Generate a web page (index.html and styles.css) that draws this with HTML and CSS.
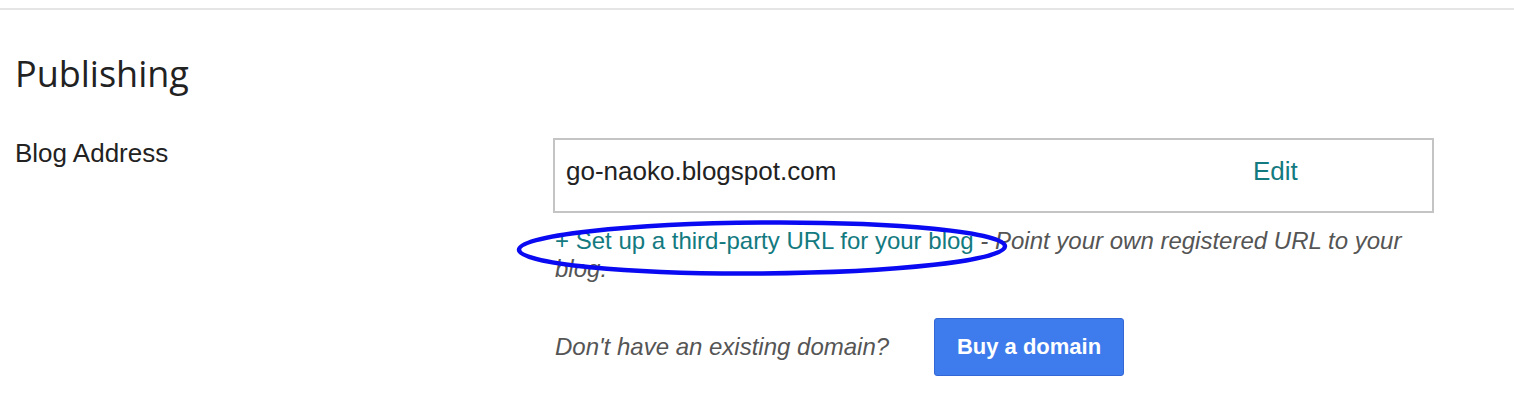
FILE: index.html
```html
<!DOCTYPE html>
<html>
<head>
<meta charset="utf-8">
<link rel="stylesheet" href="styles.css">
</head>
<body>
<div class="page">
  <h1 class="title">Publishing</h1>
  <div class="row">
    <div class="label">Blog Address</div>
    <div class="content">
      <div class="address-box">
        <span class="address">go-naoko.blogspot.com</span>
        <a class="edit">Edit</a>
      </div>
      <p class="help">
        <a class="setup">+ Set up a third-party URL for your blog</a><em> - Point your own registered URL to your blog.</em>
        <svg class="annot" width="500" height="70" viewBox="0 0 500 70"><ellipse cx="250" cy="35" rx="243" ry="25.5" transform="rotate(-0.4 250 35)" fill="none" stroke="#0a0af2" stroke-width="4.5"/></svg>
      </p>
      <div class="buy-row">
        <em class="question">Don't have an existing domain?</em>
        <button class="buy">Buy a domain</button>
      </div>
    </div>
  </div>
</div>
</body>
</html>
```

FILE: styles.css
```css
html, body {
  margin: 0;
  padding: 0;
  background: #fff;
}
body {
  font-family: "Liberation Sans", Arial, sans-serif;
}
.page {
  margin-top: 8px;
  border-top: 2px solid #e5e5e5;
  padding: 0 15px;
}
.title {
  font-family: "Open Sans", sans-serif;
  font-weight: 400;
  font-size: 36px;
  color: #222;
  margin: 0;
  padding-top: 39px;
  line-height: 50px;
}
.row {
  display: grid;
  grid-template-columns: 538px 881px;
  margin-top: 39px;
}
.label {
  font-size: 26px;
  color: #222;
  line-height: 30px;
}
.address-box {
  box-sizing: border-box;
  height: 75px;
  border: 2px solid #c4c4c4;
  display: flex;
  align-items: flex-start;
  padding: 16px 0 0 11px;
}
.address {
  font-size: 26px;
  line-height: 30px;
  color: #222;
  width: 687px;
}
.edit {
  font-size: 26px;
  line-height: 30px;
  color: #137a7f;
}
.help {
  position: relative;
  margin: 14px 0 0 0;
  padding-left: 2px;
  font-size: 24px;
  line-height: 28px;
  color: #555;
}
.help em {
  color: #555;
}
.setup {
  color: #137a7f;
}
.annot {
  position: absolute;
  left: -41px;
  top: -14px;
}
.buy-row {
  display: flex;
  align-items: center;
  margin-top: 35px;
  padding-left: 2px;
}
.question {
  font-size: 24px;
  color: #555;
  width: 379px;
}
.buy {
  box-sizing: border-box;
  width: 190px;
  height: 58px;
  background: #3e7bec;
  border: 1px solid #3367d6;
  border-radius: 3px;
  color: #fff;
  font-family: "Liberation Sans", Arial, sans-serif;
  font-weight: 700;
  font-size: 22px;
  padding: 0;
}
```
